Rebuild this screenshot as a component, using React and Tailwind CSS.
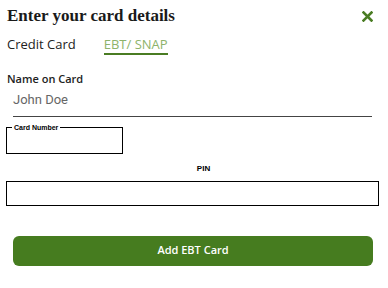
export default function App() {
  return (
    <div className="w-[388px] h-[288px] bg-white relative overflow-hidden">
      <div className="flex items-center justify-between pl-[7px] pr-[15px] pt-[3px]">
        <h2 className="text-[17px] font-bold text-[#1a1a1a]" style={{ fontFamily: '"Liberation Serif", serif' }}>
          Enter your card details
        </h2>
        <svg width="11" height="11" viewBox="0 0 11 11" className="mt-[2px]">
          <path d="M1.5 1.5 L9.5 9.5 M9.5 1.5 L1.5 9.5" stroke="#4a7c23" strokeWidth="2.6" strokeLinecap="square" />
        </svg>
      </div>

      <div className="flex gap-[28px] pl-[7px] mt-[7px] text-[13px] leading-[16px]" style={{ fontFamily: '"Open Sans", sans-serif' }}>
        <span className="font-medium text-[#222] pb-[3px]">Credit Card</span>
        <span className="font-medium text-[#8db36b] pb-[1px] border-b-2 border-[#4a7c23]">EBT/ SNAP</span>
      </div>

      <div className="mt-[17px] pl-[7px] pr-[16px]" style={{ fontFamily: '"Open Sans", sans-serif' }}>
        <label className="block text-[11px] leading-[14px] font-semibold text-[#222]">Name on Card</label>
        <div className="ml-[6px] mt-[6px] pb-[8px] border-b border-[#444] text-[13px] leading-[16px] text-[#666]" style={{ fontFamily: 'Roboto, sans-serif' }}>
          John Doe
        </div>
      </div>

      <fieldset className="ml-[6px] mt-[7px] w-[117px] h-[30px] border border-black px-[5px]" style={{ fontFamily: '"Liberation Sans", Arial, sans-serif' }}>
        <legend className="text-[7px] font-bold px-[2px] text-black leading-[8px]">Card Number</legend>
      </fieldset>

      <div className="text-center text-[8px] leading-[10px] font-bold text-black mt-[10px] pl-[19px]" style={{ fontFamily: '"Liberation Sans", Arial, sans-serif' }}>
        PIN
      </div>

      <div className="ml-[6px] mt-[7px] w-[373px] h-[25px] border border-black"></div>

      <button className="ml-[13px] mt-[30px] w-[360px] h-[30px] rounded-[6px] bg-[#467c1f] text-white text-[11px] font-semibold" style={{ fontFamily: '"Open Sans", sans-serif' }}>
        Add EBT Card
      </button>
    </div>
  );
}
